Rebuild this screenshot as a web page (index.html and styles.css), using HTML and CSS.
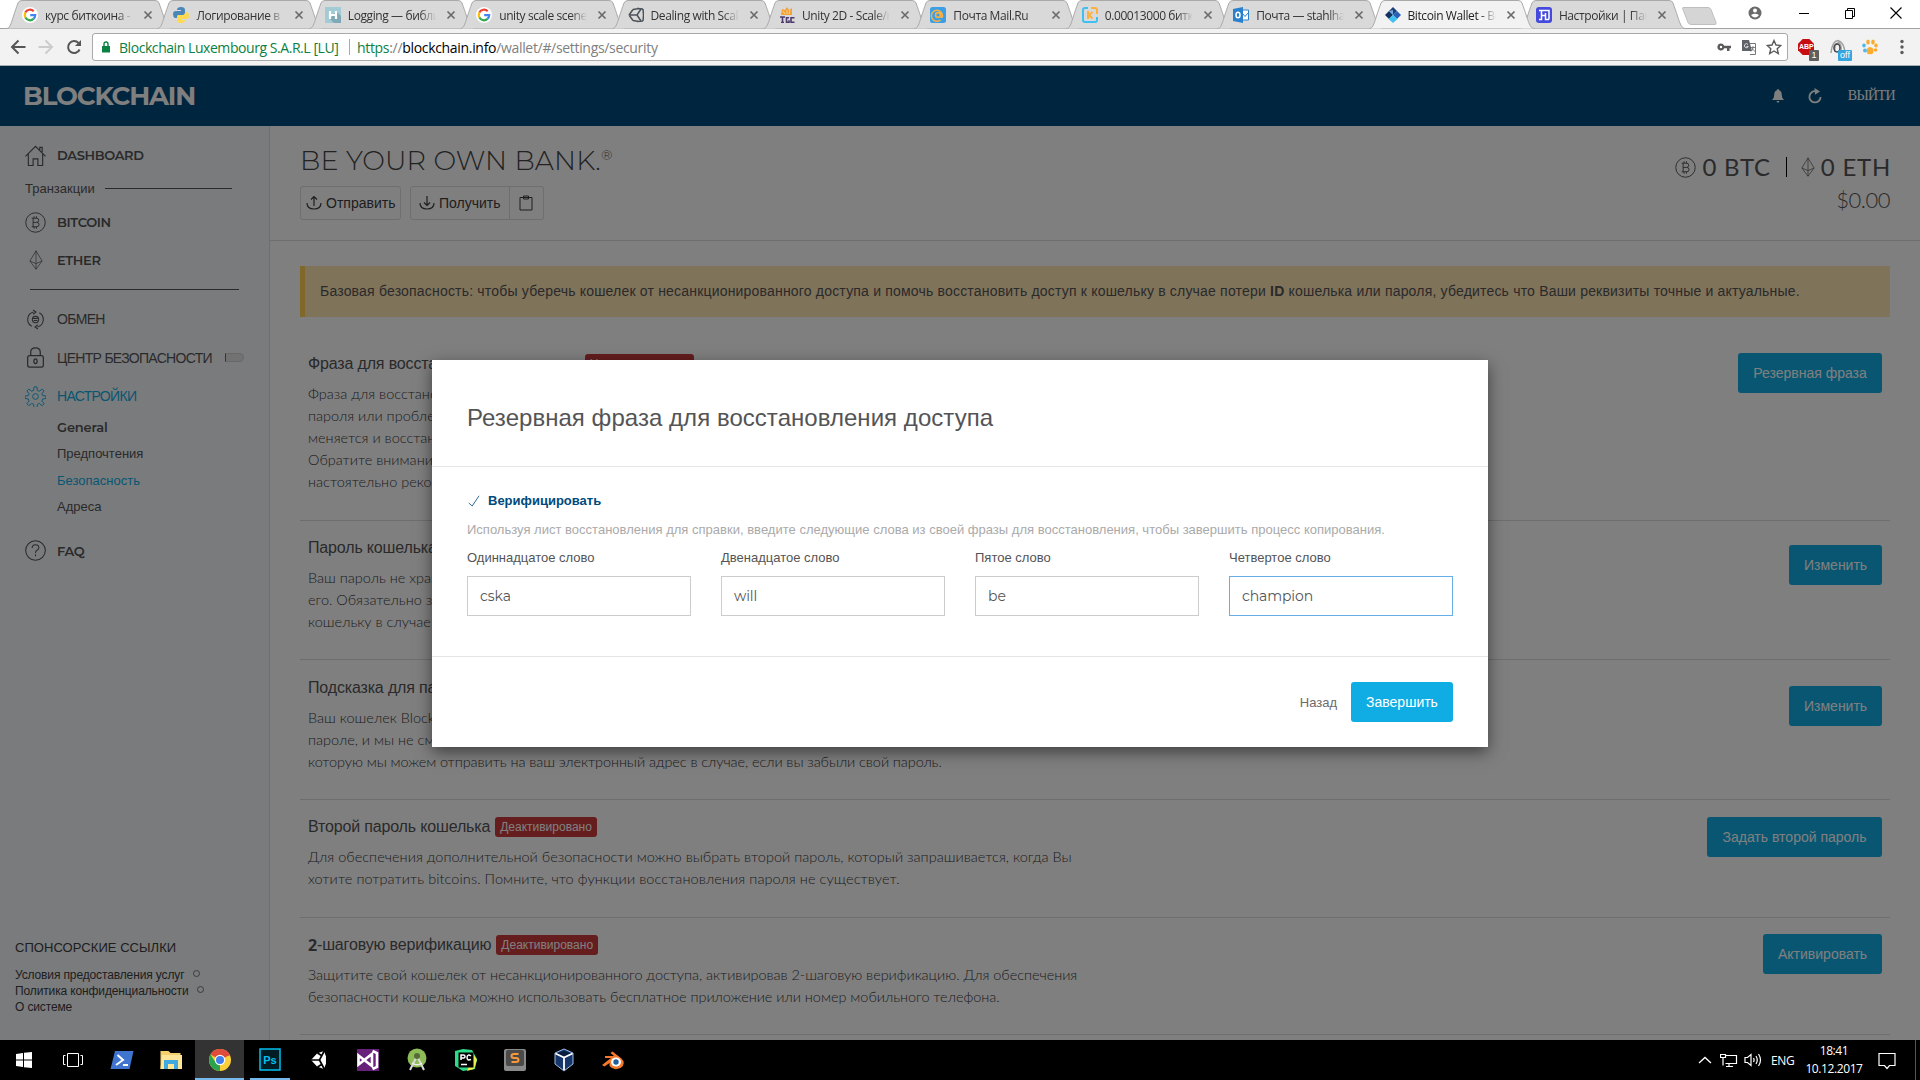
FILE: index.html
```html
<!DOCTYPE html>
<html lang="ru">
<head>
<meta charset="utf-8">
<title>Bitcoin Wallet</title>
<link rel="stylesheet" href="styles.css">
</head>
<body>
<svg class="defs" aria-hidden="true">
  <symbol id="tab" viewBox="0 0 166 29"><path class="tab-fill" d="M0.5 28.5C5 28 5 22 12 3Q13 .5 16 .5H149Q152 .5 153 3C160 22 160 28 165.500 28.500"/></symbol>
  <symbol id="x" viewBox="0 0 10 10"><path d="M1.500 1.500l7 7M8.500 1.500l-7 7" fill="none" stroke="#6b6b6b" stroke-width="1.700"/></symbol>
  <symbol id="g" viewBox="0 0 16 16"><circle cx="8" cy="8" r="8" fill="#fff"/><g fill="none" stroke-width="2.200"><path d="M3.300 5.600A5.200 5.200 0 0 1 11.700 4.300" stroke="#ea4335"/><path d="M3.300 5.600A5.200 5.200 0 0 0 3.400 10.500" stroke="#fbbc05"/><path d="M3.400 10.500A5.200 5.200 0 0 0 11.500 11.900" stroke="#34a853"/><path d="M11.500 11.900A5.200 5.200 0 0 0 13.200 8.200H8.200" stroke="#4285f4"/></g></symbol>
  <symbol id="btc" viewBox="0 0 22 22"><g fill="none" stroke="currentColor" stroke-width="1"><circle cx="11" cy="11" r="10.200"/><path d="M7 6.500h5.200a2.200 2.200 0 0 1 0 4.400H8.500M12.400 10.900a2.300 2.300 0 0 1 0 4.600H7M8.500 6.500v9M9.500 4.500v2M12 4.500v2M9.500 15.500v2M12 15.500v2"/></g></symbol>
  <symbol id="eth" viewBox="0 0 14 20"><path d="M7 .8L.9 11 7 19.200 13.100 11zM7 .8v18.400M.9 11L7 13.600 13.100 11" fill="none" stroke="currentColor" stroke-width=".7"/></symbol>
</svg>

<header class="browser">
  <div class="tabs">
    <div class="tab"><svg class="tab-bg"><use href="#tab"/></svg><svg class="fav"><use href="#g"/></svg><span>курс биткоина - Пои</span><svg class="close"><use href="#x"/></svg></div>
    <div class="tab"><svg class="tab-bg"><use href="#tab"/></svg><svg class="fav" viewBox="0 0 16 16"><path d="M4 3q0-3 4-3t4 3v3q0 2-2 2H6q-2 0-2 3H2q-2-1-2-4 0-3 3-3h5V3z" fill="#4a86b8"/><path d="M12 13q0 3-4 3t-4-3v-3q0-2 2-2h4q2 0 2-3h2q2 1 2 4 0 3-3 3H8v1z" fill="#ffd94f"/></svg><span>Логирование в Python</span><svg class="close"><use href="#x"/></svg></div>
    <div class="tab"><svg class="tab-bg"><use href="#tab"/></svg><svg class="fav" viewBox="0 0 16 16"><path d="M0 0h16v16H0z" fill="#a3cbd6"/><path d="M5 12l4 4h7V9l-5-5z" fill="#7fa9b6"/><path d="M5 4v8M11 4v8M5 8h6" stroke="#fff" stroke-width="2.200"/></svg><span>Logging — библиот</span><svg class="close"><use href="#x"/></svg></div>
    <div class="tab"><svg class="tab-bg"><use href="#tab"/></svg><svg class="fav"><use href="#g"/></svg><span>unity scale scene to</span><svg class="close"><use href="#x"/></svg></div>
    <div class="tab"><svg class="tab-bg"><use href="#tab"/></svg><svg class="fav" viewBox="0 0 16 16"><path d="M15 2l-6-.500M15 2l.500 6M15 14l-6 .500M15 14l.500-6M1 8l4-5.500M1 8l4 5.500M1 8h8l4-6M9 8l4 6M5 2.500l6-1M5 13.500l6 1" fill="none" stroke="#4b535a" stroke-width="1.500"/></svg><span>Dealing with Scale</span><svg class="close"><use href="#x"/></svg></div>
    <div class="tab"><svg class="tab-bg"><use href="#tab"/></svg><svg class="fav" viewBox="0 0 16 16"><path d="M2 8l1-6 3 1 2-3 2 3 3-2v7z" fill="#f5a13a"/><path d="M4 4l2 3M8 3v4M11 3l-1 4" stroke="#fbd18b"/><path d="M1 10h5M3.500 10v6M2 15.500h3M10 10.800H7.500v4.500H10v-2M15.500 10.800h-3.500v4.500h3.500" fill="none" stroke="#4d3a6e" stroke-width="1.600"/></svg><span>Unity 2D - Scale/re</span><svg class="close"><use href="#x"/></svg></div>
    <div class="tab"><svg class="tab-bg"><use href="#tab"/></svg><svg class="fav" viewBox="0 0 16 16"><rect width="16" height="16" rx="2.500" fill="#3b9fe8"/><circle cx="8" cy="8" r="2.400" fill="none" stroke="#fbb040" stroke-width="1.600"/><path d="M10.600 5.500v3.500q.2 1.500 1.700 1A5.500 5.500 0 1 0 10.500 13" fill="none" stroke="#fbb040" stroke-width="1.500"/></svg><span>Почта Mail.Ru</span><svg class="close"><use href="#x"/></svg></div>
    <div class="tab"><svg class="tab-bg"><use href="#tab"/></svg><svg class="fav" viewBox="0 0 16 16"><path d="M6 1H3Q1 1 1 3v10q0 2 2 2h10q2 0 2-2v-3" fill="none" stroke="#3fc0f0" stroke-width="2"/><path d="M9 1h4q2 0 2 2v4M6 4v8M10.500 5L7 8l3.500 3.500" fill="none" stroke="#fbb040" stroke-width="2"/></svg><span>0.00013000 битко</span><svg class="close"><use href="#x"/></svg></div>
    <div class="tab"><svg class="tab-bg"><use href="#tab"/></svg><svg class="fav" viewBox="0 0 16 16"><path d="M9 3h6.500v10H9z" fill="#fff" stroke="#2a80cc"/><path d="M9.500 6.500l2.500 3 3-3.500" fill="none" stroke="#2a80cc"/><path d="M0 2l10-2v16L0 14z" fill="#2a80cc"/><ellipse cx="5" cy="8" rx="2" ry="2.800" fill="none" stroke="#fff" stroke-width="1.500"/></svg><span>Почта — stahlhamm</span><svg class="close"><use href="#x"/></svg></div>
    <div class="tab active"><svg class="tab-bg"><use href="#tab"/></svg><svg class="fav" viewBox="0 0 16 16"><path d="M8 0l4 4-4 4-4-4z" fill="#1d3f77"/><path d="M4 4l4 4-4 4-4-4z" fill="#123262"/><path d="M12 4l4 4-4 4-4-4z" fill="#2a5fb8"/><path d="M8 8l4.500 4L8 16l-4.500-4z" fill="#3fc0ef"/><path d="M8 8L4 4l4-1z" fill="#6fa8dc"/></svg><span>Bitcoin Wallet - Be</span><svg class="close"><use href="#x"/></svg></div>
    <div class="tab"><svg class="tab-bg"><use href="#tab"/></svg><svg class="fav" viewBox="0 0 16 16"><rect width="16" height="16" rx="3" fill="#4448dc"/><path d="M3 3.500h10v9M5.500 3.500v9H3M5.500 8.500h4M9.500 6v6.500H13" fill="none" stroke="#fff" stroke-width="1.500"/></svg><span>Настройки | Панель</span><svg class="close"><use href="#x"/></svg></div>
    <svg class="newtab" viewBox="0 0 35 19"><path d="M1 .5h25q2 0 3 2l5 13q.5 2-1 2H9q-2 0-3-2L.8 2Q.3.500 1 .5z" fill="#d5d5d5" stroke="#bfbfbf"/></svg>
    <div class="win">
      <svg viewBox="0 0 16 16"><circle cx="8" cy="8" r="6.500" fill="#6a6a6a"/><circle cx="8" cy="5.500" r="2" fill="#fff"/><path d="M4 10q4-2.500 8 0-4 5-8 0z" fill="#fff"/></svg>
      <svg viewBox="0 0 16 16"><path d="M3 8.500h10" stroke="#000"/></svg>
      <svg viewBox="0 0 16 16"><path d="M3.500 5.500h7v8h-7zM5.500 5.500v-2h7v8h-2" fill="none" stroke="#000"/></svg>
      <svg viewBox="0 0 16 16"><path d="M2.500 2.500l11 11M13.500 2.500l-11 11" stroke="#000" stroke-width="1.100"/></svg>
    </div>
  </div>
  <div class="toolbar">
    <div class="nav">
      <svg viewBox="0 0 16 16"><path d="M15.500 8H2M8.500 1.500L2 8l6.500 6.500" fill="none" stroke="#555" stroke-width="2"/></svg>
      <svg viewBox="0 0 16 16"><path d="M.5 8H14M7.500 1.500L14 8l-6.500 6.500" fill="none" stroke="#ccc" stroke-width="2"/></svg>
      <svg viewBox="0 0 16 16"><path d="M13.600 10.500A6 6 0 1 1 12.500 4" fill="none" stroke="#555" stroke-width="2"/><path d="M15 1v6H9z" fill="#555"/></svg>
    </div>
    <div class="omnibox">
      <svg class="lock" viewBox="0 0 10 12"><path d="M1 5h8v6.500H1z" fill="#0b8043"/><path d="M3 5V3q0-2 2-2t2 2v2" fill="none" stroke="#0b8043" stroke-width="1.400"/></svg>
      <span class="owner">Blockchain Luxembourg S.A.R.L [LU]</span>
      <i class="split"></i>
      <span class="url"><b>https</b>://<em>blockchain.info</em>/wallet/#/settings/security</span>
      <div class="omni-icons">
        <svg viewBox="0 0 16 16"><path d="M5 4.500a3.500 3.500 0 1 0 3.200 4.800H11V12h2.500V9.300H15V6.700H8.200A3.500 3.500 0 0 0 5 4.500zm0 2.300a1.200 1.200 0 1 1 0 2.400 1.200 1.200 0 0 1 0-2.400z" fill="#5a5a5a"/></svg>
        <svg viewBox="0 0 16 16"><path d="M7 4.500h7.500v11H9" fill="#fff" stroke="#777"/><path d="M1 1h7l3 11H1z" fill="#5f6368"/><path d="M7 5.500a2 2 0 1 0 .3 2H5.500" fill="none" stroke="#ddd"/><path d="M10 8.500h4M12 7v1.500q-.5 3-2 4M11 9q1 2 3 3.500" fill="none" stroke="#777" stroke-width=".9"/></svg>
        <svg viewBox="0 0 16 16"><path d="M8 1.500l2 4.500 4.800.5-3.600 3.200 1.100 4.800L8 12l-4.300 2.500 1.100-4.800L1.200 6.500 6 6z" fill="none" stroke="#5a5a5a" stroke-width="1.400"/></svg>
      </div>
    </div>
    <div class="ext">
      <div class="ext-item"><svg viewBox="0 0 16 16"><path d="M4.700 0h6.600L16 4.700v6.600L11.300 16H4.700L0 11.300V4.700z" fill="#c70d12"/></svg><span class="abp">ABP</span><span class="tag gray">1</span></div>
      <div class="ext-item"><svg viewBox="0 0 16 16"><path d="M1 14Q2 2 8 1.500 14 3 15 14M8 3q4 2 3 10M5 13Q4 5 8 4" fill="none" stroke="#a2a2a2" stroke-width="1.500"/><ellipse cx="7" cy="9" rx="3" ry="4" fill="none" stroke="#444" stroke-width="1.500"/></svg><span class="tag blue">off</span></div>
      <div class="ext-item"><svg viewBox="0 0 16 16"><g fill="#fbab30"><ellipse cx="11" cy="3" rx="1.800" ry="2.500"/><ellipse cx="14" cy="6.500" rx="1.800" ry="2"/><path d="M8 8q5 1 3 6-1 2-3 1z"/></g><g fill="#52b7ea"><ellipse cx="2" cy="6.500" rx="1.800" ry="2"/><ellipse cx="3" cy="11.500" rx="2" ry="2"/></g><g fill="#fbab30"><ellipse cx="6" cy="3" rx="1.800" ry="2.500"/><path d="M8 8q-4 0-3 6 1 2 3 1z"/><circle cx="13.500" cy="11" r="1.800"/></g></svg></div>
      <svg class="dots" viewBox="0 0 4 16"><circle cx="2" cy="2.500" r="1.700"/><circle cx="2" cy="8" r="1.700"/><circle cx="2" cy="13.500" r="1.700"/></svg>
    </div>
  </div>
</header>

<div class="app">
  <div class="topbar">
    <div class="logo">BLOCKCHAIN</div>
    <div class="top-actions">
      <svg class="bell" viewBox="0 0 12 14"><path d="M6 0q1 0 1 1.200Q9.800 2 9.800 6q0 3.500 2.200 5H0q2.200-1.500 2.200-5Q2.200 2 5 1.200 5 0 6 0zM4.500 12h3Q7 13.800 6 13.800T4.500 12z" fill="#fff"/></svg>
      <svg class="refresh" viewBox="0 0 14 16"><path d="M8 3.300A5.600 5.600 0 1 0 12.600 9" fill="none" stroke="#fff" stroke-width="1.800"/><path d="M6.500 0l5.500 3.500-5 3.300z" fill="#fff"/></svg>
      <span>ВЫЙТИ</span>
    </div>
  </div>
  <div class="body">
    <aside class="sidebar">
      <nav>
        <div class="item dash"><svg viewBox="0 0 22 22"><path d="M.5 12L11 1.500 21.500 12M3.500 9.500v12h5v-7h5v7h5v-12M15.500 5.500v-3h2.500v5" fill="none" stroke="currentColor" stroke-width="1.200"/></svg><b>DASHBOARD</b></div>
        <div class="group"><span>Транзакции</span><i></i></div>
        <div class="item"><svg><use href="#btc"/></svg><b>BITCOIN</b></div>
        <div class="item ether"><svg><use href="#eth"/></svg><b>ETHER</b></div>
        <hr>
        <div class="item"><svg viewBox="0 0 22 22"><g fill="none" stroke="currentColor" stroke-width="1.100"><path d="M9 3.200A8 8 0 0 0 7 18M13 18.800A8 8 0 0 0 15 4M8.500 1l3 2.200-3 2.300M13.500 16.500l-3 2.300 3 2.200"/><circle cx="11" cy="11" r="3.300"/><path d="M8.500 10h5M9 12h4"/></g></svg><span>ОБМЕН</span></div>
        <div class="item lock-row"><svg viewBox="0 0 22 22"><g fill="none" stroke="currentColor" stroke-width="1.300"><rect x="2.800" y="9" width="16.400" height="12.200" rx="2"/><path d="M6 9V5.500Q6 1 11 1t5 4.500V9"/><ellipse cx="11" cy="15" rx="1.700" ry="2.500"/></g></svg><span>ЦЕНТР БЕЗОПАСНОСТИ</span><i class="meter"></i></div>
        <div class="item on"><svg viewBox="0 0 22 22"><g fill="none" stroke="currentColor" stroke-width="1"><circle cx="11" cy="11" r="3"/><path d="M9.500 1h3l.5 3.700 2 .8 3-2.300 2 2-2.300 3 .8 1.800 3.500.5v2.500l-3.500.6-.8 2 2.300 3-2 2-3-2.300-2 .8-.5 3.700h-3L9 19.100l-2-.8-3 2.300-2-2 2.300-3-.8-2L0 13v-2.500l3.500-.5.800-1.800-2.300-3 2-2 3 2.300 2-.8z"/></g></svg><span>НАСТРОЙКИ</span></div>
        <ul>
          <li><b>General</b></li><li>Предпочтения</li><li class="on">Безопасность</li><li>Адреса</li>
        </ul>
        <div class="item faq"><svg viewBox="0 0 22 22"><g fill="none" stroke="currentColor" stroke-width="1.100"><circle cx="11" cy="11" r="10.300"/><path d="M7.500 8.500q0-3.500 3.500-3.500t3.500 3q0 1.800-2 2.800-1.500 1-1.500 2.700M11 15v2"/></g></svg><b>FAQ</b></div>
      </nav>
      <div class="links">
        <div class="links-h">СПОНСОРСКИЕ ССЫЛКИ</div>
        <div>Условия предоставления услуг <i></i></div>
        <div>Политика конфиденциальности <i></i></div>
        <div>О системе</div>
      </div>
    </aside>
    <main>
      <div class="head">
        <div>
          <h1>BE YOUR OWN BANK.<sup>®</sup></h1>
          <div class="btns">
            <div class="btn-o"><svg viewBox="0 0 16 16"><path d="M1 8q0 6 7 6t7-6M8 11V1.500M5 4.500l3-3 3 3" fill="none" stroke="currentColor" stroke-width="1.200"/></svg>Отправить</div>
            <div class="btn-o get"><svg viewBox="0 0 16 16"><path d="M1 8q0 6 7 6t7-6M8 1v9.500M5 7.500l3 3 3-3" fill="none" stroke="currentColor" stroke-width="1.200"/></svg>Получить</div>
            <div class="btn-o clip"><svg viewBox="0 0 14 16"><path d="M1 2.500h12v12.500H1zM4.500 1h5v3h-5z" fill="none" stroke="currentColor" stroke-width="1"/></svg></div>
          </div>
        </div>
        <div class="balance">
          <div class="coins"><svg class="c-btc"><use href="#btc"/></svg><span>0 BTC</span><i></i><svg class="c-eth"><use href="#eth"/></svg><span class="eth-v">0 ETH</span></div>
          <div class="usd">$0.00</div>
        </div>
      </div>
      <div class="alert"><span>Базовая безопасность: чтобы уберечь кошелек от несанкционированного доступа и помочь восстановить доступ к кошельку в случае потери <b>ID</b> кошелька или пароля, убедитесь что Ваши реквизиты точные и актуальные.</span></div>
      <section class="s1">
        <div>
          <h2>Фраза для восстановления доступа <mark>Не подтверждено</mark></h2>
          <p>Фраза для восстановления доступа — это резервная копия<br>пароля или проблемы с сервисом. Эта фраза никогда не<br>меняется и восстанавливает все средства кошелька.<br>Обратите внимание, что при утере фразы доступ теряется,<br>настоятельно рекомендуем хранить её в надёжном месте.</p>
        </div>
        <button>Резервная фраза</button>
      </section>
      <section class="s2">
        <div>
          <h2>Пароль кошелька</h2>
          <p>Ваш пароль не хранится на наших серверах, и мы не знаем<br>его. Обязательно запомните его, чтобы иметь доступ к<br>кошельку в случае необходимости.</p>
        </div>
        <button>Изменить</button>
      </section>
      <section class="s3">
        <div>
          <h2>Подсказка для пароля</h2>
          <p>Ваш кошелек Blockchain никогда не передает сведения о<br>пароле, и мы не сможем его сбросить. Создайте подсказку,<br><span class="l3">которую мы можем отправить на ваш электронный адрес в случае, если вы забыли свой пароль.</span></p>
        </div>
        <button>Изменить</button>
      </section>
      <section class="s4">
        <div>
          <h2>Второй пароль кошелька <mark>Деактивировано</mark></h2>
          <p><span class="l4a">Для обеспечения дополнительной безопасности можно выбрать второй пароль, который запрашивается, когда Вы</span><br><span class="l4b">хотите потратить bitcoins. Помните, что функции восстановления пароля не существует.</span></p>
        </div>
        <button>Задать второй пароль</button>
      </section>
      <section class="s5">
        <div>
          <h2><b>2</b>-шаговую верификацию <mark>Деактивировано</mark></h2>
          <p><span class="l5a">Защитите свой кошелек от несанкционированного доступа, активировав 2-шаговую верификацию. Для обеспечения</span><br><span class="l5b">безопасности кошелька можно использовать бесплатное приложение или номер мобильного телефона.</span></p>
        </div>
        <button>Активировать</button>
      </section>
    </main>
  </div>
  <div class="backdrop">
    <div class="modal">
      <div class="modal-head">Резервная фраза для восстановления доступа</div>
      <div class="modal-body">
        <div class="verify"><svg viewBox="0 0 12 12"><path d="M.8 8l3.400 3L11 .8" fill="none" stroke="#004a7c" stroke-width=".8"/></svg>Верифицировать</div>
        <div class="help">Используя лист восстановления для справки, введите следующие слова из своей фразы для восстановления, чтобы завершить процесс копирования.</div>
        <div class="fields">
          <label>Одиннадцатое слово<div class="field">cska</div></label>
          <label>Двенадцатое слово<div class="field">will</div></label>
          <label>Пятое слово<div class="field">be</div></label>
          <label>Четвертое слово<div class="field focus">champion</div></label>
        </div>
      </div>
      <div class="modal-foot"><span>Назад</span><button>Завершить</button></div>
    </div>
  </div>
</div>

<footer class="taskbar">
  <div class="apps">
    <div class="app-i"><svg viewBox="0 0 24 24"><path d="M4 6l7-1v6.500H4zM12 4.800L20 4v7.500h-8zM4 12.500h7V19l-7-1zM12 12.500h8V20l-8-.800z" fill="#fff"/></svg></div>
    <div class="app-i"><svg viewBox="0 0 24 24"><path d="M6.500 5.500h11v13h-11zM4.500 7.500h-2v9h2M19.500 7.500h2v9h-2" fill="none" stroke="#fff"/></svg></div>
    <div class="app-i"><svg viewBox="0 0 24 24"><path d="M5 3h18.500l-4 18H.5z" fill="#3f74d1"/><path d="M7.500 7l5.500 5-7 5M13 17h5" fill="none" stroke="#fff" stroke-width="2"/></svg></div>
    <div class="app-i"><svg viewBox="0 0 24 24"><path d="M1.500 3h8l2 2h10v16h-20z" fill="#f4cf6b"/><path d="M3 7h20v14H1.500z" fill="#ffe597"/><path d="M5 21v-9h14v9h-4v-5H9v5z" fill="#3fa9e0"/></svg></div>
    <div class="app-i run cur"><svg viewBox="0 0 24 24"><circle cx="12" cy="12" r="11" fill="#fbcf3b"/><path d="M12 12L2.500 6.500A11 11 0 0 1 21.700 7z" fill="#df4b3c"/><path d="M12 12v11A11 11 0 0 1 2.500 6.500L8 15z" fill="#2ba24c"/><path d="M12 7h9.700" stroke="#df4b3c"/><circle cx="12" cy="12" r="5.200" fill="#fff"/><circle cx="12" cy="12" r="4" fill="#3f7fee"/></svg></div>
    <div class="app-i run ps"><svg viewBox="0 0 24 24"><path d="M2 1h20v21H2z" fill="#001d26" stroke="#00c0f0" stroke-width="1.500"/><text x="12" y="16" text-anchor="middle">Ps</text></svg></div>
    <div class="app-i"><svg viewBox="0 0 24 24"><path d="M4 12l6-6.500 7-2.500 2.500 7v4L17 21l-7-2.500z" fill="#fff"/><path d="M3 12h9.500l5-9.500M12.500 12l5 9.500M10.500 5l4 2.500M10.500 19l4-2.500M19.800 9v6" stroke="#000" stroke-width="1.700" fill="none"/></svg></div>
    <div class="app-i"><svg viewBox="0 0 24 24"><path d="M1 1h22v22H1z" fill="#68217a"/><path d="M2.500 7.500L16 18V6L2.500 16.500zM16.500 3L21 5v14l-4.500 2" fill="none" stroke="#fff" stroke-width="2.600"/></svg></div>
    <div class="app-i"><svg viewBox="0 0 24 24"><circle cx="12" cy="10" r="9.500" fill="#8dbb55"/><path d="M12 8L5 22M12 8l7 14" stroke="#d8d8d8" stroke-width="2"/><circle cx="12" cy="8" r="3" fill="#576b39"/><path d="M7 15q5 3.500 10 0" fill="none" stroke="#eee" stroke-width="1.500"/></svg></div>
    <div class="app-i"><svg viewBox="0 0 24 24"><path d="M1 3l8-2 9 1 5 9-2 10-12 2-8-5z" fill="#2ddb8a"/><path d="M18 4l5 8-3 9-7 2 4-10z" fill="#ecec4a"/><path d="M4.500 4.500h15v15h-15z" fill="#000"/><path d="M7 12V7h2.500q1.500 0 1.500 1.500T9.500 10H7M17 8q-3.500-2.500-4 1.500 0 3.500 4 2M7 16.500h6" fill="none" stroke="#fff" stroke-width="1.500"/></svg></div>
    <div class="app-i"><svg viewBox="0 0 24 24"><rect x="1" y="1" width="22" height="22" rx="2" fill="#8a8a8a"/><rect x="3" y="2" width="18" height="16" rx="2" fill="#4a4a4a"/><path d="M15.500 6H11q-2.500 0-2.500 2T11 10h2q2.500 0 2.500 2T13 14H8.500" fill="none" stroke="#f7983a" stroke-width="2"/></svg></div>
    <div class="app-i"><svg viewBox="0 0 24 24"><path d="M3 5l9-4 9 4v11l-9 7-9-7z" fill="#16366b" stroke="#9fbfe6"/><path d="M5 5.500L12 3l7 2.500-7 3.500z" fill="#0a1d40"/><path d="M12 9.500V22M3.500 5.500l8.500 4 8.500-4" fill="none" stroke="#fff" stroke-width="1.800"/></svg></div>
    <div class="app-i bl"><svg viewBox="0 0 24 24"><path d="M1 17l9-7H4V8h9L9.500 5l2-1.500 9 7q5 5-1 9.500-7 3-11-2V15l-5 3.500z" fill="#f5792a"/><ellipse cx="15" cy="14" rx="5" ry="4.500" fill="#fff"/><circle cx="15" cy="14" r="2.700" fill="#1f5f9e"/></svg></div>
  </div>
  <div class="tray">
    <svg class="chev" viewBox="0 0 14 8"><path d="M1 7l6-5.500L13 7" fill="none" stroke="#fff" stroke-width="1.300"/></svg>
    <svg class="net" viewBox="0 0 18 16"><path d="M5.500 3.500h11v8H5.500M.5 2.500h5v3h-5zM3 5.500v8M9 11.500v3M6 14.500h7" fill="none" stroke="#fff" stroke-width="1.200"/></svg>
    <svg class="vol" viewBox="0 0 18 16"><path d="M1 5.500h2.500L7 2.500v11l-3.500-3H1zM9.500 6q1.200 2 0 4M12 4q2.500 4 0 8M14.500 2q4 6 0 12" fill="none" stroke="#fff" stroke-width="1.200"/></svg>
    <span class="lang">ENG</span>
    <div class="clock"><span>18:41</span><span>10.12.2017</span></div>
    <svg class="note" viewBox="0 0 18 18"><path d="M1 1.500h16v12h-5.500L9 16.500l-2.500-3H1z" fill="none" stroke="#fff" stroke-width="1.200"/></svg>
    <i class="desk"></i>
  </div>
</footer>
</body>
</html>
```

FILE: styles.css
```css
* { box-sizing: border-box; }
body { margin: 0; width: 1920px; height: 1080px; overflow: hidden; font-family: "Liberation Sans", Arial, sans-serif; font-size: 13px; color: #545456; display: flex; flex-direction: column; }
svg { flex: none; display: block; }
i, em { font-style: normal; }
.defs { position: absolute; width: 0; height: 0; }

/* browser chrome */
.browser { height: 66px; flex: none; background: #fff; font-family: "Open Sans", "Noto Sans", sans-serif; }
.tabs { height: 28px; display: flex; padding-left: 6px; }
.tab { position: relative; width: 151.400px; flex: none; height: 29px; display: flex; align-items: center; padding: 1px 0 0 16px; font-size: 12px; letter-spacing: -.4px; color: #333; }
.tab-bg { position: absolute; left: 0; top: 0; width: 166px; height: 29px; fill: #d9d9d9; stroke: #a9a9a9; }
.tab.active { z-index: 2; color: #222; }
.tab.active .tab-bg { fill: #f2f2f2; }
.fav { position: relative; width: 16px; height: 16px; }
.tab span { position: relative; width: 88px; margin-left: 7px; white-space: nowrap; overflow: hidden; -webkit-mask: linear-gradient(90deg, #000 72px, transparent); mask: linear-gradient(90deg, #000 72px, transparent); }
.close { position: relative; width: 10px; height: 10px; margin-left: 10px; }
.newtab { width: 35px; height: 19px; margin: 7px 0 0 11px; }
.win { display: flex; margin: 5px 0 0 30px; }
.win svg { width: 16px; height: 16px; margin-right: 30px; }
.win svg:first-child { margin-right: 33px; }
.toolbar { height: 38px; background: #f2f2f2; border-top: 1px solid #a3a3a3; border-bottom: 1px solid #a6adb3; display: flex; align-items: center; }
.nav { display: flex; gap: 12px; padding-left: 10px; width: 92px; }
.nav svg { width: 16px; height: 16px; }
.omnibox { width: 1696px; height: 28px; background: #fff; border: 1px solid #a9a9a9; border-radius: 3px; display: flex; align-items: center; padding-left: 8px; font-size: 14px; white-space: nowrap; }
.lock { width: 10px; height: 12px; margin-right: 8px; }
.owner { width: 220px; color: #0b8043; letter-spacing: -.44px; }
.split { width: 1px; height: 16px; background: #aaa; margin: 0 7px 0 10px; }
.url { color: #808080; letter-spacing: -.32px; }
.url b { color: #0b8043; font-weight: 400; }
.url em { color: #000; }
.omni-icons { margin-left: auto; display: flex; gap: 9px; padding-right: 5px; }
.omni-icons svg { width: 16px; height: 16px; }
.ext { display: flex; align-items: center; padding-left: 10px; }
.ext-item { position: relative; width: 32px; }
.ext-item svg { width: 16px; height: 16px; }
.abp { position: absolute; left: 1px; top: 3px; font: bold 7px/10px "Liberation Sans", sans-serif; color: #fff; }
.tag { position: absolute; left: 11px; top: 11px; height: 11px; width: 10px; font: 9px/11px "Liberation Sans", sans-serif; color: #fff; text-align: center; border-radius: 1px; }
.tag.gray { background: #5f5f5f; }
.tag.blue { background: #35a4df; left: 8px; width: 14px; }
.dots { width: 4px; height: 16px; fill: #5a5a5a; margin-left: 6px; }

/* wallet */
.app { position: relative; height: 974px; flex: none; display: flex; flex-direction: column; background: #fff; overflow: hidden; }
.topbar { height: 60px; flex: none; background: #004a7c; color: #fff; display: flex; justify-content: space-between; align-items: center; padding: 0 25px 0 23px; }
.logo { font: 700 26px/30px Montserrat, Inter, sans-serif; letter-spacing: -1.150px; }
.top-actions { display: flex; align-items: center; font: 14px/16px "Liberation Serif", serif; letter-spacing: -.6px; }
.bell { width: 12px; height: 14px; margin-right: 24px; }
.refresh { width: 14px; height: 16px; margin-right: 26px; }
.body { flex: 1; display: flex; min-height: 0; }
.sidebar { width: 270px; flex: none; background: #f5f7f9; border-right: 1px solid #dcdee0; padding-top: 11px; display: flex; flex-direction: column; justify-content: space-between; white-space: nowrap; }
.item { height: 38px; display: flex; align-items: center; padding-left: 25px; font-size: 14px; letter-spacing: -.7px; }
.item svg { width: 21px; height: 21px; margin-right: 11px; }
.item b { font: 600 13px/18px Montserrat, Inter, sans-serif; letter-spacing: -.35px; }
.item.dash { height: 36px; }
.item.ether { height: 38px; }
.item.ether svg { width: 14px; height: 20px; margin: 0 14px 0 4px; }
.item.lock-row { height: 39px; }
.on { color: #10ade4; }
.meter { width: 19px; height: 9px; margin-left: 13px; background: #e4e4e4; border: 1px solid #d0d0d0; border-left: 1px solid #ca3a3c; border-radius: 0 5px 5px 0; }
.group { height: 30px; display: flex; align-items: center; gap: 10px; padding-left: 25px; font-size: 13px; }
.group span { width: 70px; }
.group i { width: 127px; height: 1px; background: #545456; }
hr { width: 209px; height: 1px; border: 0; margin: 10px 0 10px 30px; background: #545456; }
ul { list-style: none; margin: 0 0 10px; padding: 0 0 0 57px; }
li { height: 26.400px; line-height: 26.400px; font-size: 13px; }
li b { font: 600 13px/25px Montserrat, Inter, sans-serif; letter-spacing: -.15px; }
.item.faq { height: 40px; }
.links { padding: 0 0 25px 15px; font-size: 12px; line-height: 16px; letter-spacing: -.13px; color: #3c3c3e; }
.links-h { font-size: 13px; margin-bottom: 11px; letter-spacing: .05px; }
.links i { display: inline-block; width: 7px; height: 7px; border: 1px solid #777; border-radius: 50%; margin-left: 5px; vertical-align: 2px; }

main { flex: 1; position: relative; }
.head { height: 115px; border-bottom: 1px solid #dcdcdc; display: flex; justify-content: space-between; padding: 17px 30px 0 30px; }
h1 { margin: 0 0 7px; font: 300 27px/36px Montserrat, Inter, sans-serif; letter-spacing: .2px; white-space: nowrap; color: #444; }
h1 sup { font-size: 14px; line-height: 0; vertical-align: 10px; }
.btns { display: flex; font-size: 14px; line-height: 31px; color: #3c3c3e; }
.btn-o { height: 34px; border: 1px solid #dcdcdc; border-radius: 3px; display: flex; align-items: center; padding-left: 5px; width: 101px; }
.btn-o svg { width: 16px; height: 16px; margin-right: 4px; }
.btn-o.get { width: 100px; margin-left: 9px; padding-left: 8px; border-radius: 3px 0 0 3px; }
.btn-o.clip { width: 34px; border-left: 0; border-radius: 0 3px 3px 0; padding-left: 9px; }
.btn-o.clip svg { width: 14px; }
.balance { padding-top: 7px; }
.coins { display: flex; align-items: center; font: 24px/34px Lato, sans-serif; letter-spacing: .75px; }
.coins i { width: 1px; height: 20px; background: #000; margin: 0 14px 0 15px; }
.c-btc { width: 21px; height: 21px; margin-right: 6px; }
.c-eth { width: 14px; height: 20px; margin-right: 6px; }
.eth-v { margin-right: -1px; }
.usd { font: 300 22px/31px Lato, sans-serif; text-align: right; letter-spacing: -.5px; }
.alert { margin: 25px 30px 0; height: 51px; background: #ffe6b4; border-left: 5px solid #ffd052; padding-left: 15px; font-size: 14px; line-height: 50px; letter-spacing: .19px; white-space: nowrap; }
section { margin: 0 30px; padding: 0 8px; border-bottom: 1px solid #dcdcdc; display: flex; justify-content: space-between; align-items: flex-start; white-space: nowrap; }
h2 { margin: 0 0 8px; font-size: 16px; line-height: 22px; font-weight: 400; letter-spacing: -.16px; display: flex; align-items: center; }
h2 b { font-family: "Open Sans", sans-serif; }
mark { height: 20px; margin-left: 5px; padding: 0 5px; background: #ca3a3c; color: #fff; border-radius: 3px; font-size: 12px; line-height: 20px; letter-spacing: 0; }
p { margin: 0; font: 300 14.500px/22px Lato, sans-serif; color: #3a3a3c; }
.l3 { letter-spacing: -.08px; }
.l4a { letter-spacing: .015px; }
.l4b { letter-spacing: .075px; }
.l5a { letter-spacing: -.05px; }
.l5b { letter-spacing: -.03px; }
.s1 { height: 204px; padding-top: 36px; }
.s1 mark { width: 109px; margin-left: 16px; text-align: center; }
.s2 { height: 139px; padding-top: 16px; }
.s3 { height: 140px; padding-top: 17px; }
.s4 { height: 118px; padding-top: 16px; }
.s5 { height: 117px; padding-top: 16px; }
button { height: 40px; border: 0; border-radius: 3px; background: #10ade4; color: #fff; font: 14px "Liberation Sans", Arial, sans-serif; padding: 0 15px; }
.s2 button { margin-top: 8px; width: 93px; }
.s3 button { margin-top: 9px; width: 93px; }
.s4 button { margin-top: 1px; width: 175px; }
.s1 button { width: 144px; }
.s5 button { width: 119px; }

/* dialog */
.backdrop { position: absolute; inset: 0; background: rgba(0, 0, 0, .5); padding: 294px 432px 0; }
.modal { height: 387px; background: #fff; box-shadow: 0 5px 15px rgba(0, 0, 0, .5); white-space: nowrap; }
.modal-head { height: 107px; border-bottom: 1px solid #e5e5e5; padding-left: 35px; font-size: 24px; line-height: 116px; letter-spacing: .04px; }
.modal-body { height: 190px; border-bottom: 1px solid #e5e5e5; padding: 24px 35px 0; }
.verify { display: flex; align-items: center; font-weight: 700; color: #004a7c; line-height: 20px; }
.verify svg { width: 12px; height: 12px; margin: 0 8px 0 1px; }
.help { margin-top: 9px; line-height: 20px; color: #aaa; letter-spacing: .01px; }
.fields { display: flex; gap: 30px; margin-top: 8px; }
.fields label { width: 224px; line-height: 20px; }
.field { height: 40px; margin-top: 8px; border: 1px solid #ccc; padding-left: 12px; font: 400 14px/38px Montserrat, Inter, sans-serif; letter-spacing: -.1px; }
.field.focus { border-color: #66afe9; }
.modal-foot { display: flex; justify-content: flex-end; align-items: center; gap: 14px; height: 90px; padding: 0 35px 0 0; color: #6b6b6d; }
.modal-foot button { width: 102px; }

/* taskbar */
.taskbar { height: 40px; flex: none; background: #000; display: flex; justify-content: space-between; color: #fff; font-family: "Open Sans", "Noto Sans", sans-serif; }
.apps { display: flex; margin-left: -1px; }
.app-i { width: 49px; height: 40px; display: flex; align-items: center; justify-content: center; }
.app-i svg { width: 24px; height: 24px; }
.app-i.run { border-bottom: 2px solid #76b9ed; padding-top: 2px; }
.app-i.cur { background: #333; }
.app-i.ps { width: 40px; margin: 0 4px 0 6px; }
.app-i text { font: bold 11px "Liberation Sans", sans-serif; fill: #00c0f0; }
.tray { display: flex; align-items: center; font-size: 12px; letter-spacing: -.4px; }
.chev { width: 14px; height: 8px; margin-right: 8px; }
.net { width: 18px; height: 16px; margin-right: 6px; }
.vol { width: 18px; height: 16px; margin-right: 9px; }
.lang { width: 23px; }
.clock { width: 80px; display: flex; flex-direction: column; align-items: center; line-height: 18px; }
.note { width: 18px; height: 18px; margin: 2px 19px 0 4px; }
.desk { width: 5px; height: 40px; border-left: 1px solid #555; }
```
